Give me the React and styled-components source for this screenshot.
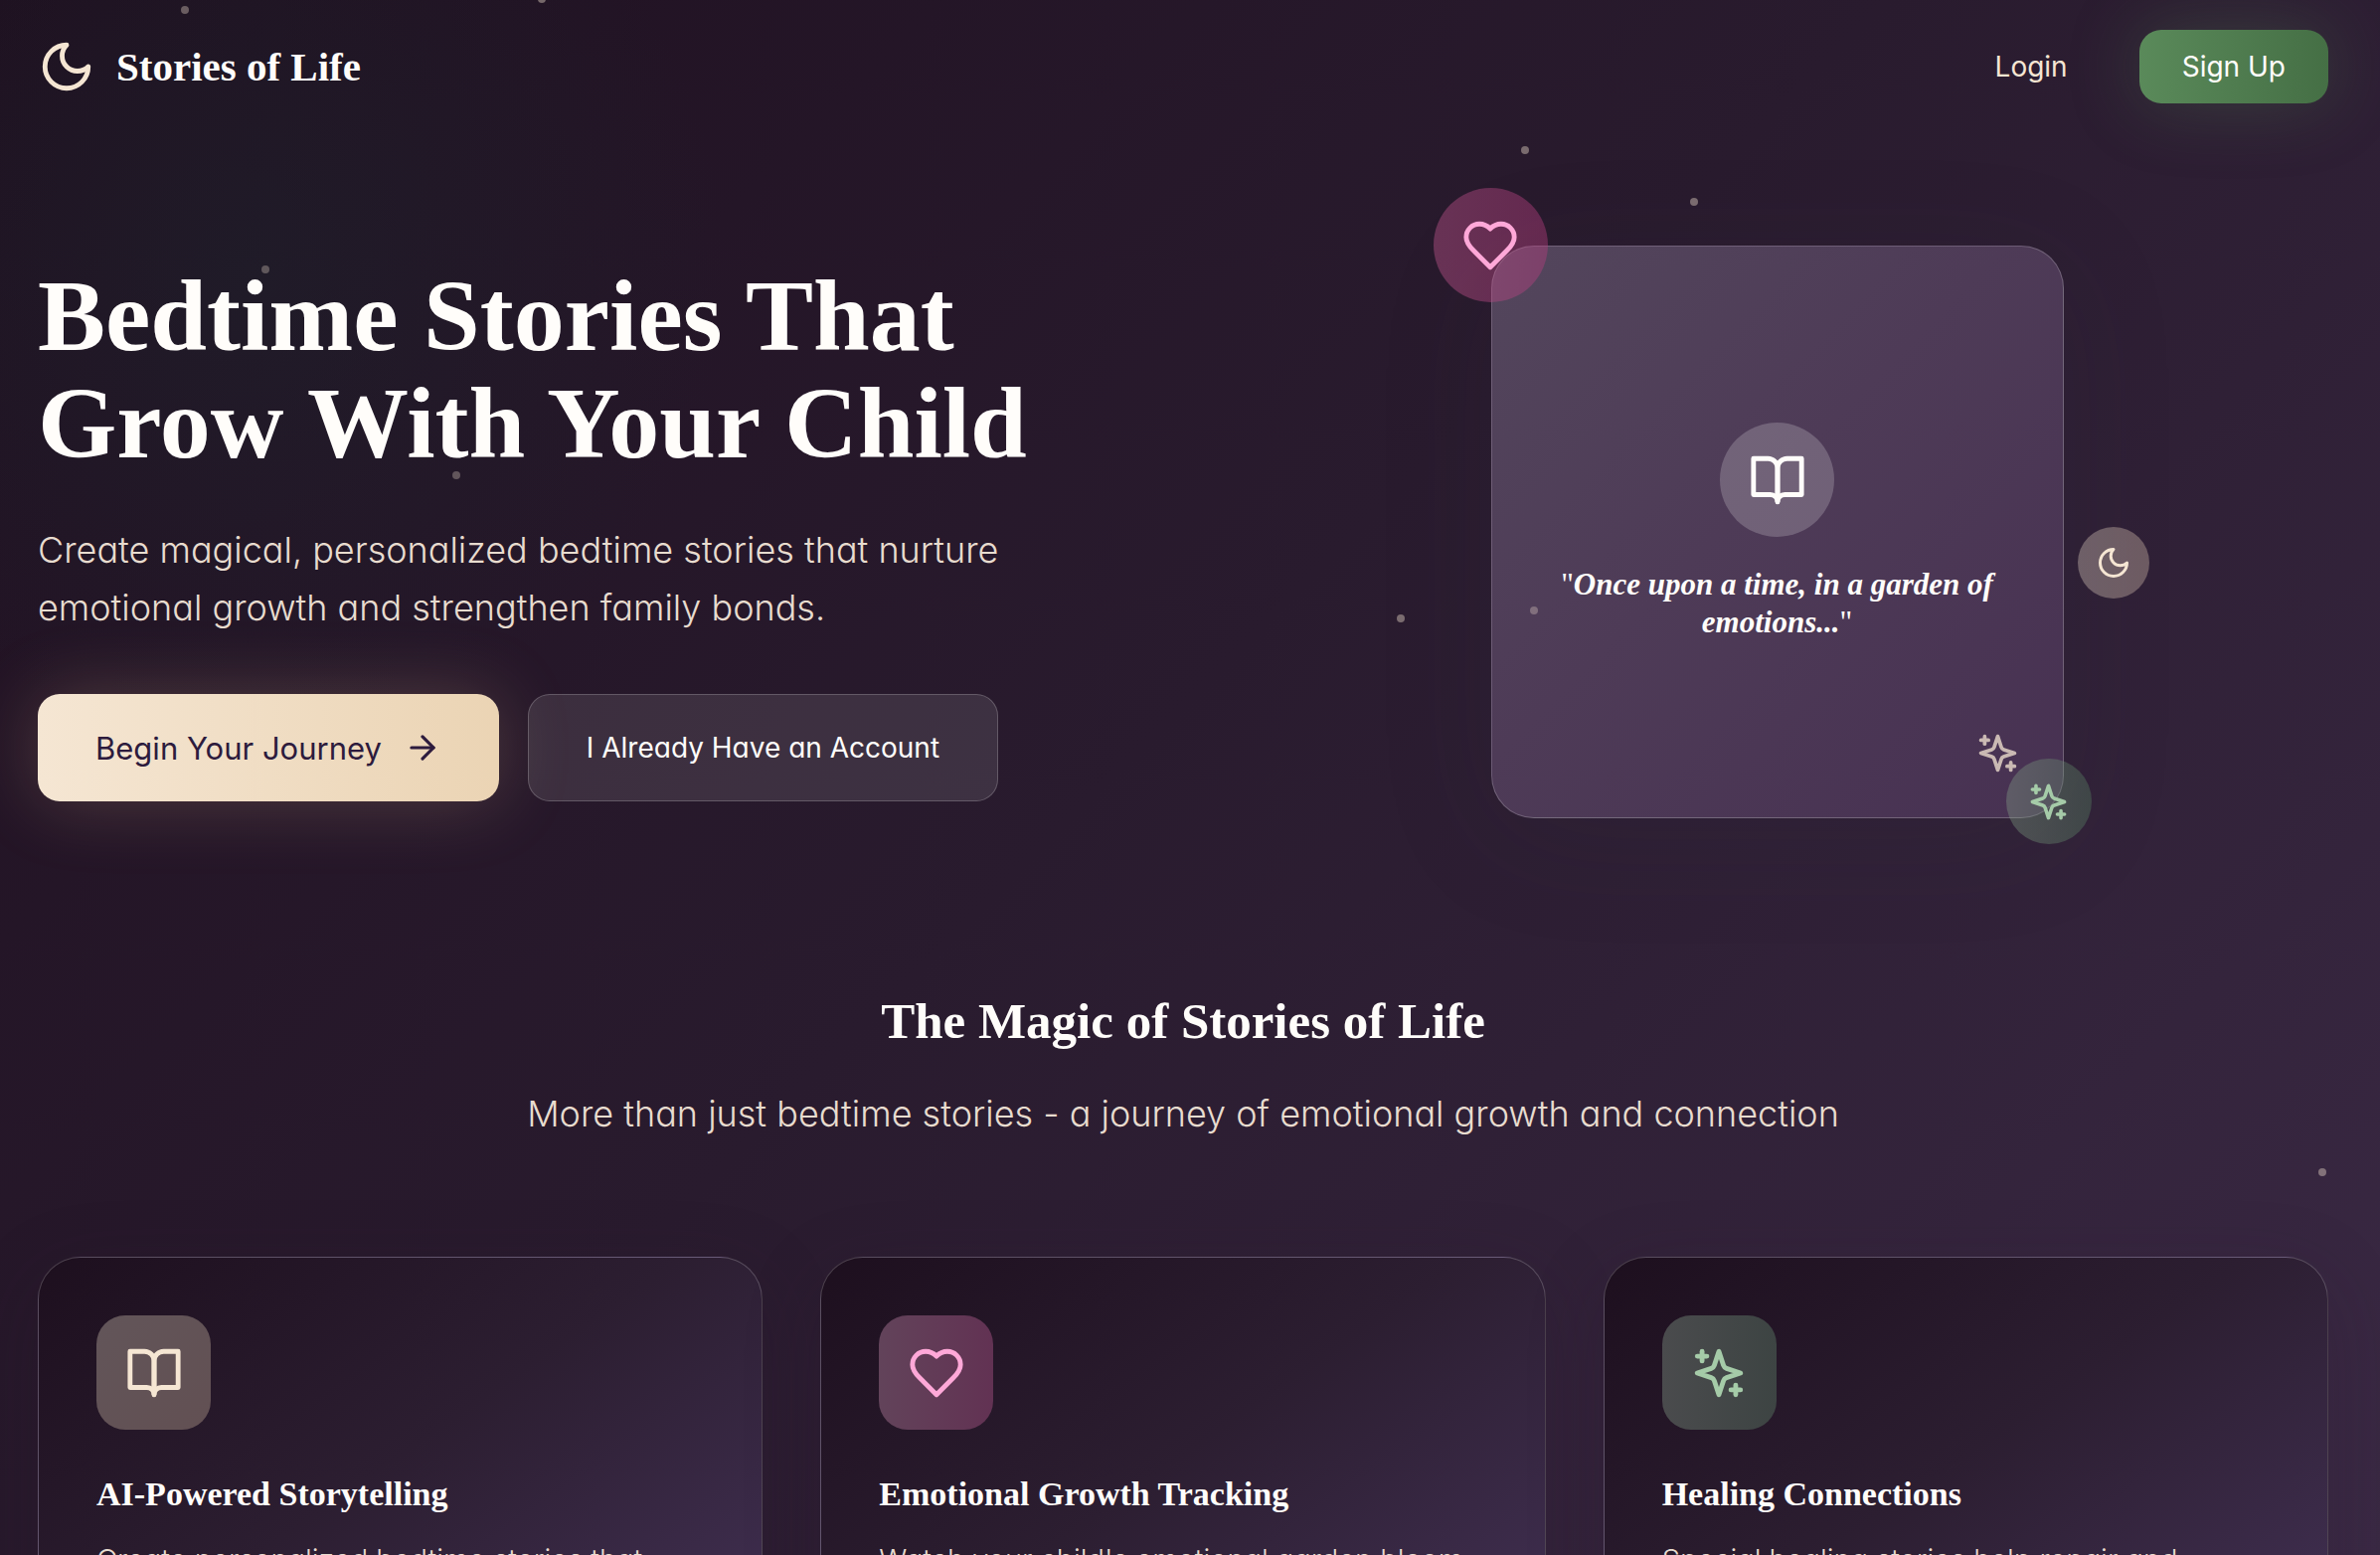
import styled, { createGlobalStyle } from 'styled-components'

const GlobalStyle = createGlobalStyle`
  * {
    box-sizing: border-box;
    margin: 0;
    padding: 0;
  }

  body {
    background: #20111f;
    color: #fffdfa;
    font-family: Inter, 'Liberation Sans', sans-serif;
    font-feature-settings: 'cv11';
    font-size: 28px;
  }
`

const serif = `'Liberation Serif', 'Times New Roman', serif`

const Page = styled.div`
  position: relative;
  height: 100vh;
  overflow: hidden;
  padding: 0 52px 0 38px;
  background:
    radial-gradient(circle at 250px 270px, rgba(28, 42, 48, 0.35), transparent 480px),
    linear-gradient(135deg, #1f1020 0%, #291b2e 48%, #3a2944 100%);
`

const Star = styled.span`
  position: absolute;
  z-index: 1;
  left: ${props => props.$x}%;
  top: ${props => props.$y}%;
  width: 8px;
  height: 8px;
  border-radius: 50%;
  background: rgba(245, 230, 211, ${props => props.$alpha});
`

const Header = styled.header`
  display: flex;
  justify-content: space-between;
  align-items: center;
  padding: 30px 0;
`

const Logo = styled.a`
  display: flex;
  align-items: center;
  gap: 21px;
  color: #fffdfa;
  font-family: ${serif};
  font-size: 41px;
  line-height: 44px;
  font-weight: bold;
  text-decoration: none;
`

const Nav = styled.nav`
  display: flex;
  align-items: center;
  gap: 72px;
`

const LoginLink = styled.a`
  color: #f5e6d3;
  text-decoration: none;
`

const Button = styled.button`
  display: inline-flex;
  align-items: center;
  gap: 22px;
  border: none;
  border-radius: 22px;
  color: #fffdfa;
  font-family: inherit;
  font-feature-settings: inherit;
  font-size: 28px;
  white-space: nowrap;
  cursor: pointer;
`

const SignUpButton = styled(Button)`
  height: 74px;
  padding: 0 43px;
  background: linear-gradient(90deg, #5a8a5a, #456f45);
  box-shadow: 0 0 72px rgba(90, 138, 90, 0.3);
`

const PrimaryButton = styled(Button)`
  height: 108px;
  padding: 0 58px;
  background: linear-gradient(90deg, #f5e6d3, #ebd4b4);
  box-shadow: 0 0 72px rgba(235, 190, 150, 0.22);
  color: #2d1b3d;
  font-size: 31px;
`

const GhostButton = styled(Button)`
  height: 108px;
  padding: 0 58px;
  border: 1px solid rgba(255, 255, 255, 0.2);
  background: rgba(255, 255, 255, 0.1);
`

const Hero = styled.section`
  display: grid;
  grid-template-columns: 1fr 1fr;
  align-items: center;
  gap: 86px;
  padding: 113px 0 168px;
`

const HeroTitle = styled.h1`
  font-family: ${serif};
  font-size: 102px;
  line-height: 108px;
`

const HeroText = styled.p`
  max-width: 1000px;
  margin: 44px 0 58px;
  color: #e8dccf;
  font-size: 36px;
  font-weight: 350;
  line-height: 58px;
`

const Actions = styled.div`
  display: flex;
  gap: 29px;
`

const StoryCard = styled.div`
  position: relative;
  justify-self: center;
  display: flex;
  flex-direction: column;
  align-items: center;
  justify-content: center;
  gap: 29px;
  width: 576px;
  height: 576px;
  padding: 0 57px;
  border: 1px solid rgba(255, 255, 255, 0.2);
  border-radius: 43px;
  background: linear-gradient(135deg, #53465c 0%, #4e3b57 45%, #473152 100%);
  box-shadow: 0 20px 120px rgba(50, 50, 60, 0.12);
`

const Quote = styled.p`
  font-family: ${serif};
  font-size: 31px;
  line-height: 38px;
  font-weight: bold;
  font-style: italic;
  text-align: center;
`

const QuoteMark = styled.span`
  font-style: normal;
  font-weight: normal;
`

const badgeFills = {
  white: 'rgba(255, 255, 255, 0.2)',
  pink: 'linear-gradient(90deg, rgba(190, 85, 140, 0.43), rgba(180, 60, 125, 0.43))',
  cream: 'linear-gradient(90deg, rgba(245, 230, 211, 0.32), rgba(240, 215, 190, 0.32))',
  green: 'linear-gradient(90deg, rgba(138, 170, 140, 0.35), rgba(90, 138, 100, 0.35))',
}

const Badge = styled.div`
  display: flex;
  align-items: center;
  justify-content: center;
  width: ${props => props.$size}px;
  height: ${props => props.$size}px;
  border-radius: 50%;
  background: ${props => badgeFills[props.$tone]};
`

const HeartBadge = styled(Badge)`
  position: absolute;
  top: -59px;
  left: -59px;
`

const MoonBadge = styled(Badge)`
  position: absolute;
  top: 282px;
  right: -87px;
`

const SparkleBadge = styled(Badge)`
  position: absolute;
  right: -29px;
  bottom: -27px;
`

const CardSparkle = styled.div`
  position: absolute;
  right: 43px;
  bottom: 42px;
  display: flex;
  opacity: 0.75;
`

const SectionHeading = styled.div`
  text-align: center;
`

const SectionTitle = styled.h2`
  font-family: ${serif};
  font-size: 51px;
  line-height: 72px;
`

const SectionText = styled.p`
  margin-top: 28px;
  color: #e8dccf;
  font-size: 36px;
  font-weight: 350;
  line-height: 58px;
`

const Features = styled.div`
  display: grid;
  grid-template-columns: repeat(3, 1fr);
  gap: 58px;
  margin-top: 115px;
`

const FeatureCard = styled.article`
  min-height: 500px;
  padding: 58px;
  border: 1px solid rgba(255, 255, 255, 0.2);
  border-radius: 43px;
  background: linear-gradient(145deg, #1d0f1e 0%, #2c1e31 45%, #46345a 100%);
  box-shadow: 0 20px 80px rgba(45, 25, 45, 0.2);
`

const featureFills = {
  cream: 'linear-gradient(135deg, #625559, #625053)',
  pink: 'linear-gradient(90deg, #62435a, #623253)',
  green: 'linear-gradient(90deg, #4a4b4d, #3d4443)',
}

const FeatureIcon = styled.div`
  display: flex;
  align-items: center;
  justify-content: center;
  width: 115px;
  height: 115px;
  border-radius: 29px;
  background: ${props => featureFills[props.$tone]};
`

const FeatureTitle = styled.h3`
  margin-top: 43px;
  font-family: ${serif};
  font-size: 34px;
  line-height: 43px;
`

const FeatureText = styled.p`
  margin-top: 21px;
  color: #e8dccf;
  font-size: 29px;
  font-weight: 350;
  line-height: 47px;
`

const iconPaths = {
  moon: ['M12 3a6 6 0 0 0 9 9 9 9 0 1 1-9-9Z'],
  book: [
    'M2 3h6a4 4 0 0 1 4 4v14a3 3 0 0 0-3-3H2z',
    'M22 3h-6a4 4 0 0 0-4 4v14a3 3 0 0 1 3-3h7z',
  ],
  heart: [
    'M19 14c1.49-1.46 3-3.21 3-5.5A5.5 5.5 0 0 0 16.5 3c-1.76 0-3 .5-4.5 2-1.5-1.5-2.74-2-4.5-2A5.5 5.5 0 0 0 2 8.5c0 2.3 1.5 4.05 3 5.5l7 7Z',
  ],
  sparkles: [
    'm12 3-1.912 5.813a2 2 0 0 1-1.275 1.275L3 12l5.813 1.912a2 2 0 0 1 1.275 1.275L12 21l1.912-5.813a2 2 0 0 1 1.275-1.275L21 12l-5.813-1.912a2 2 0 0 1-1.275-1.275L12 3Z',
    'M5 3v4',
    'M19 17v4',
    'M3 5h4',
    'M17 19h4',
  ],
  arrow: ['M5 12h14', 'm12 5 7 7-7 7'],
}

function Icon({ name, size, color = 'currentColor' }) {
  return (
    <svg
      width={size}
      height={size}
      viewBox="0 0 24 24"
      fill="none"
      stroke={color}
      strokeWidth="2"
      strokeLinecap="round"
      strokeLinejoin="round"
      aria-hidden="true"
    >
      {iconPaths[name].map(d => <path key={d} d={d} />)}
    </svg>
  )
}

const CREAM = '#f5e6d3'
const PINK = '#ffa8d8'
const GREEN = '#a5cba8'

const stars = [
  { x: 7.6, y: 0.4, alpha: 0.35 },
  { x: 22.6, y: -0.3, alpha: 0.4 },
  { x: 11, y: 17.1, alpha: 0.3 },
  { x: 19, y: 30.3, alpha: 0.3 },
  { x: 63.9, y: 9.4, alpha: 0.4 },
  { x: 71, y: 12.7, alpha: 0.4 },
  { x: 58.7, y: 39.5, alpha: 0.4 },
  { x: 64.3, y: 39, alpha: 0.3 },
  { x: 97.4, y: 75.1, alpha: 0.4 },
]

const features = [
  { icon: 'book', tone: 'cream', color: CREAM, title: 'AI-Powered Storytelling', text: 'Create personalized bedtime stories that' },
  { icon: 'heart', tone: 'pink', color: PINK, title: 'Emotional Growth Tracking', text: "Watch your child's emotional garden bloom" },
  { icon: 'sparkles', tone: 'green', color: GREEN, title: 'Healing Connections', text: 'Special healing stories help repair and' },
]

function App() {
  return (
    <>
      <GlobalStyle />
      <Page>
        {stars.map(star => (
          <Star key={star.x} $x={star.x} $y={star.y} $alpha={star.alpha} />
        ))}
        <Header>
          <Logo href="#">
            <Icon name="moon" size={58} color={CREAM} />
            Stories of Life
          </Logo>
          <Nav>
            <LoginLink href="#login">Login</LoginLink>
            <SignUpButton>Sign Up</SignUpButton>
          </Nav>
        </Header>
        <main>
          <Hero>
            <div>
              <HeroTitle>
                Bedtime Stories That<br />
                Grow With Your Child
              </HeroTitle>
              <HeroText>
                Create magical, personalized bedtime stories that nurture emotional
                growth and strengthen family bonds.
              </HeroText>
              <Actions>
                <PrimaryButton>
                  Begin Your Journey
                  <Icon name="arrow" size={38} />
                </PrimaryButton>
                <GhostButton>I Already Have an Account</GhostButton>
              </Actions>
            </div>
            <StoryCard>
              <Badge $size={115} $tone="white">
                <Icon name="book" size={58} />
              </Badge>
              <Quote>
                <QuoteMark>"</QuoteMark>
                Once upon a time, in a garden of emotions...
                <QuoteMark>"</QuoteMark>
              </Quote>
              <CardSparkle>
                <Icon name="sparkles" size={45} color={CREAM} />
              </CardSparkle>
              <HeartBadge $size={115} $tone="pink">
                <Icon name="heart" size={58} color={PINK} />
              </HeartBadge>
              <MoonBadge $size={72} $tone="cream">
                <Icon name="moon" size={36} color={CREAM} />
              </MoonBadge>
              <SparkleBadge $size={86} $tone="green">
                <Icon name="sparkles" size={43} color={GREEN} />
              </SparkleBadge>
            </StoryCard>
          </Hero>
          <section>
            <SectionHeading>
              <SectionTitle>The Magic of Stories of Life</SectionTitle>
              <SectionText>
                More than just bedtime stories - a journey of emotional growth and connection
              </SectionText>
            </SectionHeading>
            <Features>
              {features.map(feature => (
                <FeatureCard key={feature.title}>
                  <FeatureIcon $tone={feature.tone}>
                    <Icon name={feature.icon} size={58} color={feature.color} />
                  </FeatureIcon>
                  <FeatureTitle>{feature.title}</FeatureTitle>
                  <FeatureText>{feature.text}</FeatureText>
                </FeatureCard>
              ))}
            </Features>
          </section>
        </main>
      </Page>
    </>
  )
}

export default App
